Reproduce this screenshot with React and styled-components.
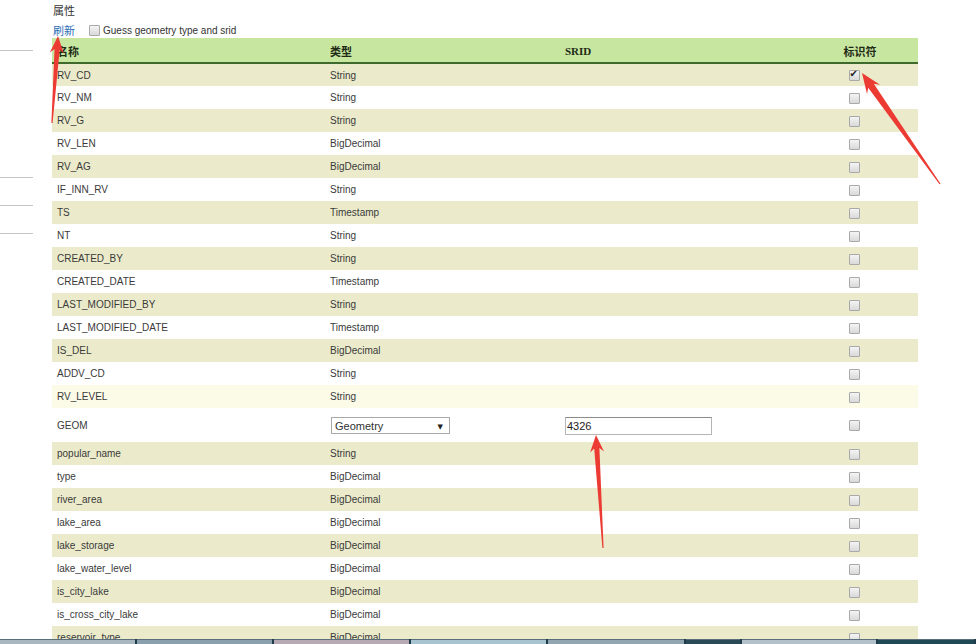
import React from 'react';
import styled, { createGlobalStyle } from 'styled-components';

const GlobalStyle = createGlobalStyle`
  html, body {
    margin: 0;
    padding: 0;
    overflow: hidden;
    background: #fff;
    font-family: "Liberation Sans", Arial, "Noto Sans CJK SC", sans-serif;
    color: #333;
  }
`;

const Page = styled.div`
  position: relative;
  width: 976px;
  height: 644px;
  overflow: hidden;
  display: flex;
`;

const LeftStrip = styled.div`
  width: 52px;
  flex: none;
  display: flex;
  flex-direction: column;
`;

const LeftRule = styled.div`
  width: 33px;
  height: 1px;
  background: #c4c4c4;
  margin-top: ${(props) => props.gap}px;
`;

const Main = styled.div`
  flex: none;
  width: 866px;
  display: flex;
  flex-direction: column;
`;

const Title = styled.div`
  height: 20px;
  line-height: 21px;
  font-size: 11px;
  padding-left: 1px;
  color: #333;
  font-family: "Noto Sans CJK SC", sans-serif;
`;

const Toolbar = styled.div`
  height: 20px;
  box-sizing: border-box;
  padding: 2px 0 0 1px;
  display: flex;
  align-items: center;
  gap: 14px;
  font-size: 10px;
`;

const RefreshLink = styled.a`
  color: #2a6db5;
  font-size: 11px;
  font-family: "Noto Sans CJK SC", sans-serif;
  text-decoration: none;
`;

const GuessLabel = styled.label`
  display: flex;
  align-items: center;
  gap: 3px;
  color: #333;
`;

const Check = styled.input.attrs({ type: 'checkbox' })`
  appearance: none;
  width: 11px;
  height: 11px;
  margin: 0;
  border: 1px solid #a9a9a9;
  border-radius: 1px;
  background: linear-gradient(#f4f4f4, #d9d9d9);
  box-sizing: border-box;
  position: relative;
  vertical-align: middle;
  &:checked::after {
    content: '✔';
    position: absolute;
    left: 0px;
    top: -3px;
    font-size: 10px;
    color: #222;
    font-family: "DejaVu Sans", sans-serif;
  }
`;

const Table = styled.table`
  width: 866px;
  border-collapse: collapse;
  table-layout: fixed;
  font-size: 10px;
`;

const HeadRow = styled.tr`
  background: #c7e7a1;
  height: 25px;
  border-bottom: 2px solid #3f6a2e;
`;

const Th = styled.th`
  padding: 1px 5px 0;
  text-align: ${(props) => (props.$center ? 'center' : 'left')};
  font-size: 11px;
  font-weight: bold;
  color: #1e2a14;
  font-family: "Liberation Serif", "Noto Sans CJK SC", serif;
`;

const Row = styled.tr`
  height: ${(props) => (props.$tall ? 34 : 23)}px;
  background: ${(props) =>
    props.$hover ? '#fbfbe8' : props.$odd ? '#ebebcb' : '#ffffff'};
`;

const Td = styled.td`
  padding: 1px 5px 0;
  color: #3a3a3a;
  white-space: nowrap;
  overflow: hidden;
  text-align: ${(props) => (props.$center ? 'center' : 'left')};
  padding-right: ${(props) => (props.$center ? 17 : 5)}px;
  line-height: 12px;
`;

const SelectWrap = styled.div`
  position: relative;
  width: 119px;
  height: 17px;
  margin-left: 1px;
  &::after {
    content: '▼';
    position: absolute;
    right: 7px;
    top: 4px;
    font-size: 7px;
    color: #222;
    pointer-events: none;
    font-family: "DejaVu Sans", sans-serif;
  }
`;

const Select = styled.select`
  appearance: none;
  width: 100%;
  height: 100%;
  margin: 0;
  padding: 0 3px;
  border: 1px solid #a8a8a8;
  background: #fff;
  font-family: "Liberation Sans", Arial, sans-serif;
  font-size: 11px;
  color: #333;
`;

const SridInput = styled.input`
  width: 147px;
  height: 18px;
  box-sizing: border-box;
  margin: 0;
  padding: 0 1px;
  border: 1px solid #b5b5b5;
  border-top-color: #8c8c8c;
  font-family: "Liberation Sans", Arial, sans-serif;
  font-size: 11px;
  color: #222;
`;

const Taskbar = styled.div`
  position: fixed;
  left: 0;
  bottom: 0;
  width: 976px;
  height: 5px;
  display: flex;
  background: #1f3c4a;
  z-index: 5;
`;

const TaskItem = styled.div`
  width: ${(props) => props.w}px;
  flex: none;
  margin-right: 2px;
  background: ${(props) => props.bg};
  border-top: 1px solid #5a6f7a;
`;

const Overlay = styled.svg`
  position: absolute;
  left: 0;
  top: 0;
  pointer-events: none;
  z-index: 4;
`;

const fields = [
  ['RV_CD', 'String'],
  ['RV_NM', 'String'],
  ['RV_G', 'String'],
  ['RV_LEN', 'BigDecimal'],
  ['RV_AG', 'BigDecimal'],
  ['IF_INN_RV', 'String'],
  ['TS', 'Timestamp'],
  ['NT', 'String'],
  ['CREATED_BY', 'String'],
  ['CREATED_DATE', 'Timestamp'],
  ['LAST_MODIFIED_BY', 'String'],
  ['LAST_MODIFIED_DATE', 'Timestamp'],
  ['IS_DEL', 'BigDecimal'],
  ['ADDV_CD', 'String'],
  ['RV_LEVEL', 'String'],
  ['GEOM', 'geom'],
  ['popular_name', 'String'],
  ['type', 'BigDecimal'],
  ['river_area', 'BigDecimal'],
  ['lake_area', 'BigDecimal'],
  ['lake_storage', 'BigDecimal'],
  ['lake_water_level', 'BigDecimal'],
  ['is_city_lake', 'BigDecimal'],
  ['is_cross_city_lake', 'BigDecimal'],
  ['reservoir_type', 'BigDecimal'],
];

const taskItems = [
  [135, '#a9b8c0'],
  [135, '#8aa0ac'],
  [135, '#b7aab4'],
  [135, '#a8c4d0'],
  [136, '#91a6b1'],
  [54, '#2b4a58'],
  [134, '#b3c2ca'],
  [96, '#1f4a55'],
];

function arrowPoints([x1, y1], [x2, y2], head = 17, barb = 7, neck = 2.6) {
  const dx = x2 - x1;
  const dy = y2 - y1;
  const len = Math.hypot(dx, dy);
  const ux = dx / len;
  const uy = dy / len;
  const px = -uy;
  const py = ux;
  const bx = x2 - ux * head;
  const by = y2 - uy * head;
  const nx = x2 - ux * head * 0.78;
  const ny = y2 - uy * head * 0.78;
  const pts = [
    [x1 + px * 0.6, y1 + py * 0.6],
    [nx + px * neck, ny + py * neck],
    [bx + px * barb, by + py * barb],
    [x2, y2],
    [bx - px * barb, by - py * barb],
    [nx - px * neck, ny - py * neck],
    [x1 - px * 0.6, y1 - py * 0.6],
  ];
  return pts.map((p) => p.map((v) => v.toFixed(1)).join(',')).join(' ');
}

const arrows = [
  [[52, 123], [58, 36], 17, 7, 2.6],
  [[940, 184], [862, 73], 20, 8, 3.4],
  [[603, 548], [596, 435], 17, 7, 2.6],
];

export default function App() {
  return (
    <>
      <GlobalStyle />
      <Page>
        <LeftStrip>
          <LeftRule gap={50} />
          <LeftRule gap={126} />
          <LeftRule gap={27} />
          <LeftRule gap={27} />
        </LeftStrip>
        <Main>
          <Title>属性</Title>
          <Toolbar>
            <RefreshLink href="#">刷新</RefreshLink>
            <GuessLabel>
              <Check />
              Guess geometry type and srid
            </GuessLabel>
          </Toolbar>
          <Table>
            <colgroup>
              <col style={{ width: 273 }} />
              <col style={{ width: 235 }} />
              <col style={{ width: 242 }} />
              <col style={{ width: 116 }} />
            </colgroup>
            <thead>
              <HeadRow>
                <Th>名称</Th>
                <Th>类型</Th>
                <Th>SRID</Th>
                <Th $center>标识符</Th>
              </HeadRow>
            </thead>
            <tbody>
              {fields.map(([name, type], i) => {
                const geom = type === 'geom';
                return (
                  <Row
                    key={name}
                    $odd={i % 2 === 0}
                    $hover={name === 'RV_LEVEL'}
                    $tall={geom}
                  >
                    <Td>{name}</Td>
                    <Td>
                      {geom ? (
                        <SelectWrap>
                          <Select defaultValue="Geometry">
                            <option>Geometry</option>
                            <option>Point</option>
                            <option>LineString</option>
                            <option>Polygon</option>
                          </Select>
                        </SelectWrap>
                      ) : (
                        type
                      )}
                    </Td>
                    <Td>{geom && <SridInput defaultValue="4326" />}</Td>
                    <Td $center>
                      <Check defaultChecked={i === 0} />
                    </Td>
                  </Row>
                );
              })}
            </tbody>
          </Table>
        </Main>
        <Overlay width="976" height="644" viewBox="0 0 976 644">
          {arrows.map(([a, b, head, barb, neck], i) => (
            <polygon
              key={i}
              points={arrowPoints(a, b, head, barb, neck)}
              fill="#ec3b33"
            />
          ))}
        </Overlay>
        <Taskbar>
          {taskItems.map(([w, bg], i) => (
            <TaskItem key={i} w={w} bg={bg} />
          ))}
        </Taskbar>
      </Page>
    </>
  );
}
